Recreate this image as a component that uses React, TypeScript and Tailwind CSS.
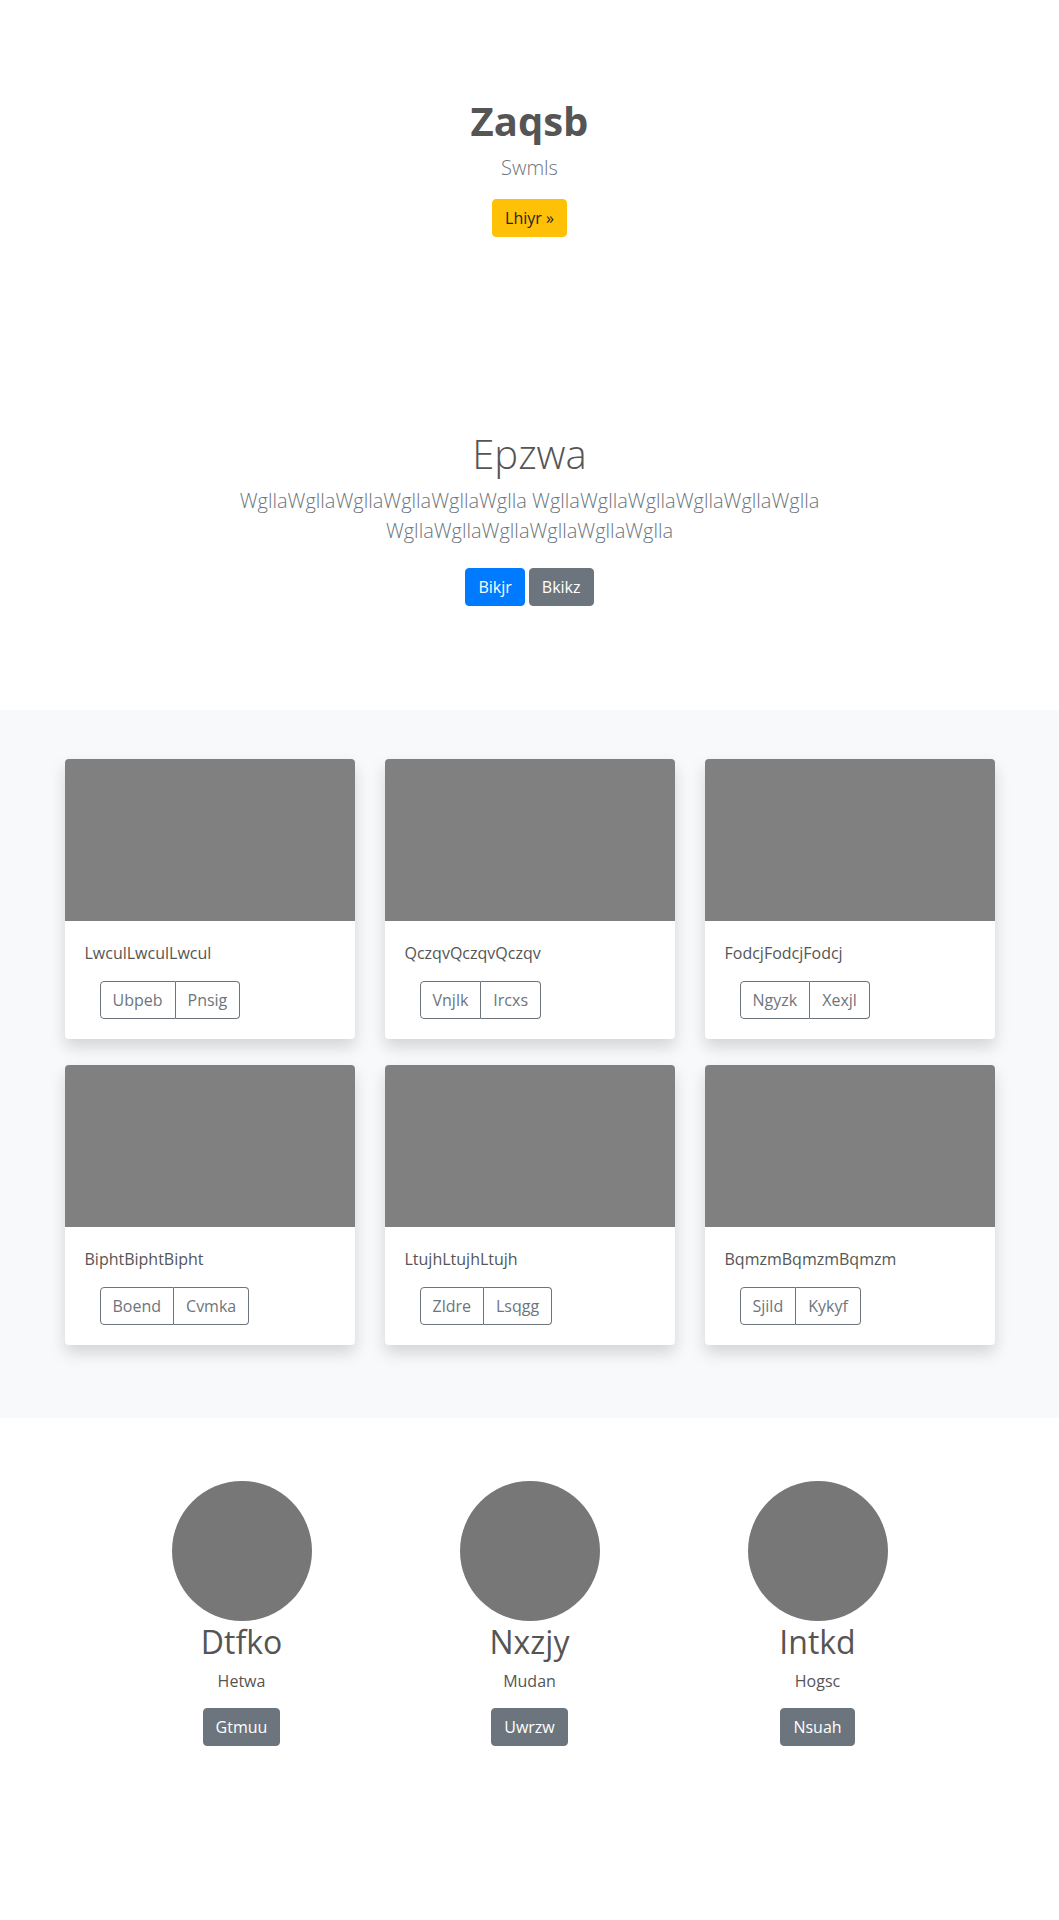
import React from "react";

var cards = [
  { title: "LwculLwculLwcul", a: "Ubpeb", b: "Pnsig" },
  { title: "QczqvQczqvQczqv", a: "Vnjlk", b: "Ircxs" },
  { title: "FodcjFodcjFodcj", a: "Ngyzk", b: "Xexjl" },
  { title: "BiphtBiphtBipht", a: "Boend", b: "Cvmka" },
  { title: "LtujhLtujhLtujh", a: "Zldre", b: "Lsqgg" },
  { title: "BqmzmBqmzmBqmzm", a: "Sjild", b: "Kykyf" },
];

var people = [
  { name: "Dtfko", role: "Hetwa", action: "Gtmuu" },
  { name: "Nxzjy", role: "Mudan", action: "Uwrzw" },
  { name: "Intkd", role: "Hogsc", action: "Nsuah" },
];

function Card({ title, a, b }: { title: string; a: string; b: string }) {
  return (
    <div className="bg-white rounded overflow-hidden shadow-[0_8px_16px_rgba(0,0,0,0.15)]">
      <div className="h-[162px] bg-[#808080]" />
      <div className="p-5">
        <p className="text-base leading-6 mb-4 text-[#555]">{title}</p>
        <div className="ml-[15px] inline-flex">
          <button className="px-3 py-[6px] text-base leading-6 text-[#6c757d] border border-[#6c757d] rounded-l">{a}</button>
          <button className="px-3 py-[6px] text-base leading-6 text-[#6c757d] border border-l-0 border-[#6c757d] rounded-r">{b}</button>
        </div>
      </div>
    </div>
  );
}

export default function App() {
  return (
    <div className="min-h-[1920px] bg-white text-[#555] font-['Open_Sans','Noto_Sans',sans-serif]">
      {/* hero */}
      <section className="text-center pt-[97px]">
        <h1 className="text-[40px] leading-[48px] font-bold mb-2">Zaqsb</h1>
        <p className="text-[20px] leading-[30px] font-light text-[#6c757d] mb-4">Swmls</p>
        <button className="px-3 py-[6px] text-base leading-6 bg-[#ffc107] border border-[#ffc107] text-[#212529] rounded">{"Lhiyr \u00bb"}</button>
      </section>

      {/* intro */}
      <section className="text-center pt-[193px] pb-[104px]">
        <h1 className="text-[40px] leading-[48px] font-light mb-2">Epzwa</h1>
        <p className="max-w-[610px] mx-auto text-[20px] leading-[30px] font-light text-[#6c757d]">
          WgllaWgllaWgllaWgllaWgllaWglla WgllaWgllaWgllaWgllaWgllaWglla WgllaWgllaWgllaWgllaWgllaWglla
        </p>
        <div className="flex justify-center gap-1 mt-[22px]">
          <button className="px-3 py-[6px] text-base leading-6 bg-[#007bff] border border-[#007bff] text-white rounded">Bikjr</button>
          <button className="px-3 py-[6px] text-base leading-6 bg-[#6c757d] border border-[#6c757d] text-white rounded">Bkikz</button>
        </div>
      </section>

      {/* album */}
      <section className="bg-[#f8f9fa] pt-[49px] pb-[73px]">
        <div className="w-[930px] mx-auto grid grid-cols-3 gap-x-[30px] gap-y-[26px]">
          {cards.map(function(c, i) {
            return <Card key={i} title={c.title} a={c.a} b={c.b} />;
          })}
        </div>
      </section>

      {/* team */}
      <section className="pt-[63px] pb-[80px]">
        <div className="w-[864px] mx-auto grid grid-cols-3 text-center">
          {people.map(function(p, i) {
            return (
              <div key={i} className="flex flex-col items-center">
                <div className="w-[140px] h-[140px] rounded-full bg-[#777]" />
                <h2 className="text-[32px] leading-[38px] mt-[2px] mb-2">{p.name}</h2>
                <p className="text-base leading-6 mb-[15px]">{p.role}</p>
                <button className="px-3 py-[6px] text-base leading-6 bg-[#6c757d] border border-[#6c757d] text-white rounded">{p.action}</button>
              </div>
            );
          })}
        </div>
      </section>
    </div>
  );
}
